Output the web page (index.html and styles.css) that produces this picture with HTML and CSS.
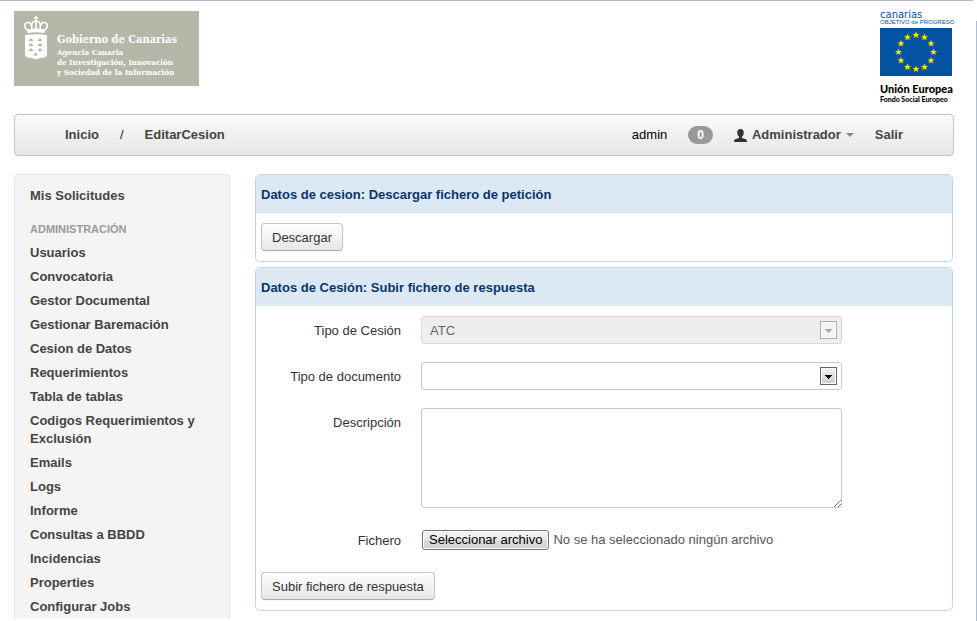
FILE: index.html
```html
<!DOCTYPE html>
<html lang="es">
<head>
<meta charset="utf-8">
<meta name="viewport" content="width=device-width, initial-scale=1">
<title>EditarCesion</title>
<link rel="stylesheet" href="styles.css">
</head>
<body>
<div class="page">
  <header class="brand">
    <div class="gobierno">
      <svg class="crest" viewBox="0 0 24 44" aria-hidden="true">
        <g fill="none" stroke="#fff" stroke-width="1.5">
          <path d="M12 0v5M10 2h4"/>
          <path d="M4 15C-1 11 0 6.500 4.500 6.500c3 0 3.500 4 3.500 8.500M20 15c5-4 4-8.500-.500-8.500-3 0-3.500 4-3.500 8.500M8 14C7 8 8 5 12 5s5 3 4 9M12 5v9"/>
        </g>
        <path fill="#fff" d="M3.500 13.500q8.500-2 17 0v3.500q-8.500-1.500-17 0zM1 19q11-1.500 22 0v19q0 3-3 3.500l-4 .5-4 1.500-4-1.500-4-.5q-3-.5-3-3.500z"/>
        <path fill="#b7b7a9" d="M5 24l2-2 2 2v1H5zM14 24l2-2 2 2v1h-4zM5 29l2-2 2 2v1H5zM14 29l2-2 2 2v1h-4zM5 34l2-2 2 2v1H5zM14 34l2-2 2 2v1h-4zM9.500 38.500l2-2 2 2v1h-4z"/>
      </svg>
      <div class="gobierno-text">
        <strong class="gobierno-name">Gobierno de Canarias</strong>
        <span>Agencia Canaria</span>
        <span>de Investigación, Innovación</span>
        <span>y Sociedad de la Información</span>
      </div>
    </div>
    <div class="europa">
      <span class="canarias">canarias</span>
      <span class="progreso">OBJETIVO de PROGRESO</span>
      <svg class="flag" viewBox="0 0 72 48" aria-hidden="true">
        <defs><path id="star" fill="#ffed00" d="M0-3.500L1-1H3.500L1.500.6 2.200 3 0 1.600-2.200 3-1.500.6-3.500-1H-1z"/></defs>
        <rect width="72" height="48" fill="#0453a2"/>
        <use href="#star" x="36" y="7"/><use href="#star" x="44.500" y="9.200"/><use href="#star" x="51" y="15.500"/>
        <use href="#star" x="53.500" y="24"/><use href="#star" x="51" y="32.500"/><use href="#star" x="44.500" y="39"/>
        <use href="#star" x="36" y="41"/><use href="#star" x="27.500" y="39"/><use href="#star" x="21" y="32.500"/>
        <use href="#star" x="18.500" y="24"/><use href="#star" x="21" y="15.500"/><use href="#star" x="27.500" y="9.200"/>
      </svg>
      <strong class="union">Unión Europea</strong>
      <strong class="fondo">Fondo Social Europeo</strong>
    </div>
  </header>

  <nav class="navbar">
    <div class="crumbs">
      <a href="#">Inicio</a>
      <span>/</span>
      <a href="#">EditarCesion</a>
    </div>
    <div class="session">
      <span class="user">admin</span>
      <span class="badge">0</span>
      <button class="role" type="button">
        <svg class="person" viewBox="0 0 12 12" aria-hidden="true"><path fill="#333" d="M6 0c2 0 3 1.300 3 3.200C9 5 8.300 6.200 7.400 7v1.200L11 9.500q1 .5 1 2.500H0q0-2 1-2.500l3.600-1.300V7C3.700 6.200 3 5 3 3.200 3 1.300 4 0 6 0z"/></svg>
        <span>Administrador</span>
        <svg class="caret" viewBox="0 0 8 4" aria-hidden="true"><path fill="#888" d="M0 0h8L4 4z"/></svg>
      </button>
      <a href="#">Salir</a>
    </div>
  </nav>

  <div class="columns">
    <aside class="sidebar">
      <a href="#">Mis Solicitudes</a>
      <h2>Administración</h2>
      <a href="#">Usuarios</a>
      <a href="#">Convocatoria</a>
      <a href="#">Gestor Documental</a>
      <a href="#">Gestionar Baremación</a>
      <a href="#">Cesion de Datos</a>
      <a href="#">Requerimientos</a>
      <a href="#">Tabla de tablas</a>
      <a href="#">Codigos Requerimientos y Exclusión</a>
      <a href="#">Emails</a>
      <a href="#">Logs</a>
      <a href="#">Informe</a>
      <a href="#">Consultas a BBDD</a>
      <a href="#">Incidencias</a>
      <a href="#">Properties</a>
      <a href="#">Configurar Jobs</a>
    </aside>

    <main class="content">
      <section class="panel">
        <h1>Datos de cesion: Descargar fichero de petición</h1>
        <div class="panel-body">
          <button class="btn" type="button">Descargar</button>
        </div>
      </section>

      <section class="panel">
        <h1>Datos de Cesión: Subir fichero de respuesta</h1>
        <form class="panel-body">
          <div class="row">
            <label for="cesion">Tipo de Cesión</label>
            <div class="field select disabled">
              <select id="cesion" disabled><option>ATC</option></select>
              <svg class="drop" viewBox="0 0 7 4" aria-hidden="true"><path d="M0 0h7v1H6v1H5v1H4v1H3V3H2V2H1V1H0z"/></svg>
            </div>
          </div>
          <div class="row">
            <label for="documento">Tipo de documento</label>
            <div class="field select">
              <select id="documento"><option></option></select>
              <svg class="drop" viewBox="0 0 7 4" aria-hidden="true"><path d="M0 0h7v1H6v1H5v1H4v1H3V3H2V2H1V1H0z"/></svg>
            </div>
          </div>
          <div class="row">
            <label for="descripcion">Descripción</label>
            <div class="field area">
              <textarea id="descripcion"></textarea>
              <svg class="grip" viewBox="0 0 8 8" aria-hidden="true"><path stroke="#444" stroke-dasharray="1 .4" d="M1 8l7-7M5 8l3-3"/></svg>
            </div>
          </div>
          <div class="row">
            <label for="fichero">Fichero</label>
            <div class="field file">
              <span class="file-button">Seleccionar archivo</span>
              <span class="file-name">No se ha seleccionado ningún archivo</span>
              <input id="fichero" type="file">
            </div>
          </div>
          <button class="btn" type="button">Subir fichero de respuesta</button>
        </form>
      </section>
    </main>
  </div>
</div>
</body>
</html>
```
FILE: styles.css
```css
* { box-sizing: border-box; }

body {
  margin: 0;
  background: #fff;
  color: #333;
  font: 13px/18px "Liberation Sans", Arial, sans-serif;
}

body::before,
body::after {
  content: "";
  position: absolute;
  background: #b4b6c3;
}
body::before { top: 0; left: 0; right: 4px; height: 1px; }
body::after { top: 21px; right: 0; bottom: 0; width: 1px; background: #a9bdd4; }

a { color: inherit; text-decoration: none; }
button, select, textarea { font: inherit; color: inherit; }

.page { padding: 11px 23px 2px 14px; }

.brand {
  display: flex;
  justify-content: space-between;
  align-items: flex-start;
  margin-bottom: 10px;
}

.gobierno {
  display: flex;
  gap: 9px;
  width: 185px;
  height: 75px;
  padding: 5px 0 0 10px;
  background: #b7b7a9;
  color: #fff;
}
.crest { width: 24px; height: 44px; }
.gobierno-text {
  display: flex;
  flex-direction: column;
  padding-top: 17px;
  font: bold 8px/10px "DejaVu Serif Condensed", "DejaVu Serif", serif;
  white-space: nowrap;
}
.gobierno-name { font-size: 11px; line-height: 14px; }

.europa {
  display: flex;
  flex-direction: column;
  width: 74px;
  height: 93px;
  white-space: nowrap;
  color: #000;
}
.canarias { font: 10px/8px "DejaVu Sans", sans-serif; color: #0453a2; }
.progreso { font: 6px/6px "Liberation Sans", sans-serif; color: #0453a2; }
.flag { width: 72px; height: 48px; margin: 3px 0 6px; }
.union { font: 900 11px/13px Lato, sans-serif; }
.fondo { font: 900 7px/8px Lato, sans-serif; }

.navbar {
  display: flex;
  justify-content: space-between;
  align-items: center;
  height: 42px;
  padding: 0 50px;
  border: 1px solid #c4c4c4;
  border-radius: 4px;
  background: linear-gradient(#fafafa, #e6e6e6);
  font-weight: bold;
  color: #444;
}
.crumbs { display: flex; gap: 21px; }
.session { display: flex; align-items: center; gap: 21px; }
.crumbs span { font-weight: normal; color: #222; }
.user { font-weight: normal; color: #000; }
.badge {
  padding: 0 9px;
  border-radius: 9px;
  background: #999;
  color: #fff;
  font-size: 12px;
}
.role {
  display: flex;
  align-items: center;
  gap: 5px;
  padding: 0;
  border: 0;
  background: none;
  font-weight: bold;
}
.person { width: 13px; height: 13px; }
.caret { width: 8px; height: 4px; }

.columns {
  display: flex;
  gap: 25px;
  margin-top: 18px;
}

.sidebar {
  flex: 0 0 216px;
  padding: 9px 15px 0;
  border: 1px solid #e6e6e6;
  border-bottom: 0;
  border-radius: 4px 4px 0 0;
  background: #f4f4f4;
  color: #444;
  font-weight: bold;
}
.sidebar a { display: block; padding: 3px 0; }
.sidebar h2 {
  margin: 9px 0 0;
  padding: 3px 0;
  color: #999;
  font-size: 11px;
  line-height: 18px;
  text-transform: uppercase;
}

.content {
  flex: 1;
  min-width: 0;
  padding-right: 1px;
}

.panel {
  margin-bottom: 5px;
  border: 1px solid #bcd8e8;
  border-radius: 5px;
  overflow: hidden;
}
.panel:last-child { margin-bottom: 0; }
.panel h1 {
  margin: 0;
  padding: 11px 5px 9px;
  background: #dce8f4;
  color: #08366b;
  font-size: 13px;
  line-height: 18px;
}
.panel-body { padding: 10px 5px; }

.btn {
  display: block;
  height: 28px;
  padding: 2px 10px 0;
  border: 1px solid #c5c5c5;
  border-bottom-color: #acacac;
  border-radius: 4px;
  background: linear-gradient(#fff, #e6e6e6);
  box-shadow: 0 1px 2px #0000000d;
}

.row {
  display: flex;
  gap: 20px;
  margin-bottom: 18px;
}
.row label {
  flex: 0 0 140px;
  padding-top: 6px;
  text-align: right;
}
.field {
  position: relative;
  flex: 1;
  max-width: 421px;
}

.select select {
  display: block;
  appearance: none;
  width: 100%;
  height: 28px;
  padding: 2px 26px 0 8px;
  border: 1px solid #c8c8c8;
  border-radius: 3px;
  background: #fff;
}
.drop {
  position: absolute;
  top: 5px;
  right: 5px;
  width: 17px;
  height: 18px;
  padding: 7px 4px 5px;
  border: 1px solid #666;
  background: linear-gradient(#f4f4f4, #ccc);
  box-shadow: inset 0 0 0 1px #fff;
  pointer-events: none;
}
.disabled select {
  border-color: #d8d8d8;
  background: #eee;
  color: #666;
  opacity: 1;
}
.disabled .drop {
  border-color: #aaa;
  background: #f3f3f3;
  fill: #aaa;
}

.area textarea {
  display: block;
  width: 100%;
  height: 100px;
  border: 1px solid #c8c8c8;
  border-radius: 3px;
  resize: none;
}
.grip {
  position: absolute;
  right: 1px;
  bottom: 1px;
  width: 8px;
  height: 8px;
  pointer-events: none;
}

.file {
  display: flex;
  align-items: center;
  gap: 4px;
  height: 28px;
  padding-left: 1px;
  line-height: 18px;
  white-space: nowrap;
}
.file-button {
  padding: 0 6px;
  border: 1px solid #707070;
  border-radius: 3px;
  background: linear-gradient(#f2f2f2, #ebebeb 50%, #ddd 50%, #cfcfcf);
  box-shadow: inset 0 0 0 1px #fff;
  color: #000;
}
.file-name { color: #555; }
.file input {
  position: absolute;
  inset: 0;
  width: 100%;
  opacity: 0;
}
```
